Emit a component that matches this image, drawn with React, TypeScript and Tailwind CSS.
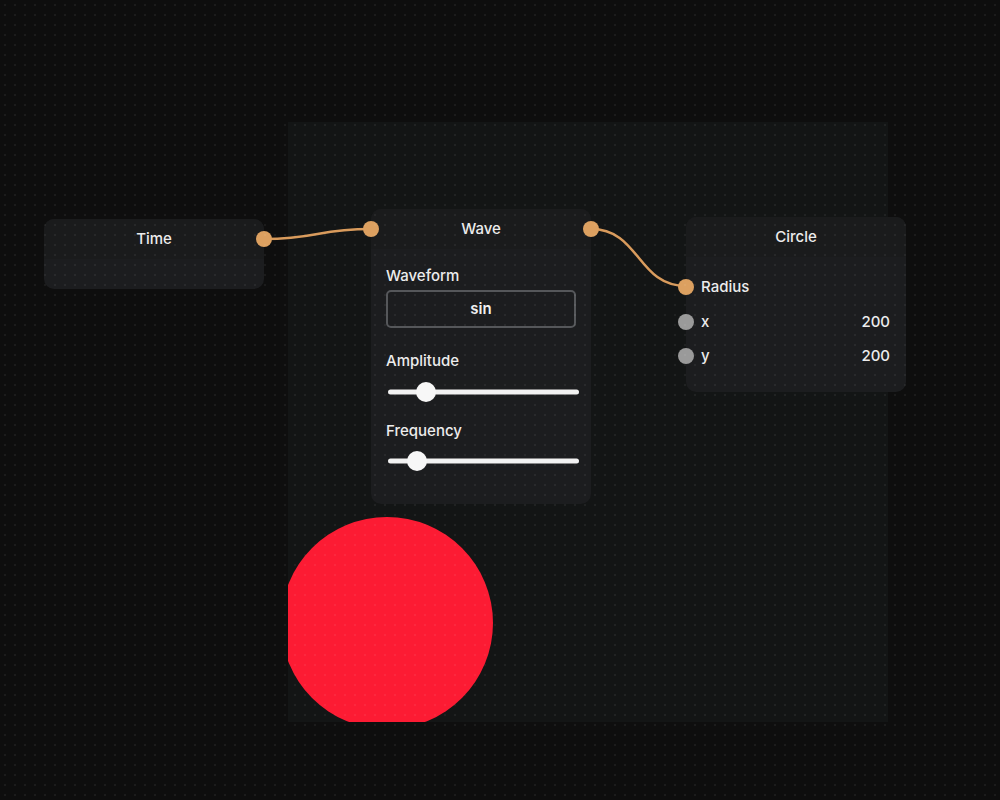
const font = { fontFamily: "Inter, 'Liberation Sans', sans-serif" };

function Handle({ className }: { className: string }) {
  return (
    <span
      className={`absolute h-[16px] w-[16px] -translate-x-1/2 -translate-y-1/2 rounded-full ${className}`}
    />
  );
}

function NodeHeader({ title }: { title: string }) {
  return (
    <div className="flex h-10 items-center justify-center rounded-t-[10px] bg-[#1a1b1c] pt-[1px] text-[15px] font-medium text-[#ececec]">
      {title}
    </div>
  );
}

function Slider({ label, pos }: { label: string; pos: number }) {
  return (
    <div className="flex flex-col">
      <span className="text-[15px] font-medium text-[#ececec]">{label}</span>
      <div className="relative mt-[9px] ml-[2px] mr-[-3px] h-5">
        <div className="absolute left-0 right-0 top-1/2 h-[5px] -translate-y-1/2 rounded-full bg-[#f2f2f2]" />
        <div
          className="absolute top-0 h-5 w-5 -translate-x-1/2 rounded-full bg-[#f7f7f7]"
          style={{ left: pos }}
        />
      </div>
    </div>
  );
}

export default function App() {
  return (
    <div
      className="relative h-[800px] w-[1000px] overflow-hidden bg-[#0e0e0e]"
      style={font}
    >
      {/* preview canvas */}
      <div className="absolute left-[288px] top-[122px] h-[600px] w-[600px] overflow-hidden bg-[#131515]">
        <div className="absolute left-[-7px] top-[395px] h-[212px] w-[212px] rounded-full bg-[#fc1b33]" />
      </div>

      {/* edges */}
      <svg className="absolute inset-0" width={1000} height={800}>
        <path
          d="M264 239 C 318 239, 317 229, 371 229"
          fill="none"
          stroke="#d99b5c"
          strokeWidth={2.5}
        />
        <path
          d="M591 229 C 640 229, 637 286, 686 286"
          fill="none"
          stroke="#d99b5c"
          strokeWidth={2.5}
        />
      </svg>

      {/* Time node */}
      <div className="absolute left-[44px] top-[219px] h-[70px] w-[220px] rounded-[10px] bg-[#1c1d1f]">
        <NodeHeader title="Time" />
        <div className="absolute left-[220px] top-5">
          <Handle className="bg-[#dca060]" />
        </div>
      </div>

      {/* Wave node */}
      <div className="absolute left-[371px] top-[209px] w-[220px] rounded-[10px] bg-[#1c1d1f]">
        <NodeHeader title="Wave" />
        <div className="absolute left-0 top-5">
          <Handle className="bg-[#dca060]" />
        </div>
        <div className="absolute left-[220px] top-5">
          <Handle className="bg-[#dca060]" />
        </div>
        <div className="flex flex-col px-[15px] pb-[33px] pt-[17px]">
          <span className="text-[15px] font-medium leading-5 text-[#ececec]">
            Waveform
          </span>
          <div className="mt-[4px] flex h-[38px] items-center justify-center rounded-[5px] border-2 border-[#55575a] text-[15px] font-semibold text-[#f0f0f0]">
            sin
          </div>
          <div className="mt-[22px] flex flex-col gap-[18px]">
            <Slider label="Amplitude" pos={38} />
            <Slider label="Frequency" pos={29} />
          </div>
        </div>
      </div>

      {/* Circle node */}
      <div className="absolute left-[686px] top-[217px] h-[175px] w-[220px] rounded-[10px] bg-[#1c1d1f]">
        <NodeHeader title="Circle" />
        <div className="flex flex-col pt-[13px]">
          {[
            { label: "Radius", value: "", color: "bg-[#dca060]" },
            { label: "x", value: "200", color: "bg-[#9a9a9a]" },
            { label: "y", value: "200", color: "bg-[#9a9a9a]" },
          ].map((row) => (
            <div
              key={row.label}
              className="relative flex h-[34.5px] items-center justify-between pl-[15px] pr-[16px] text-[15px] font-medium text-[#ececec]"
            >
              <div className="absolute left-0 top-1/2">
                <Handle className={row.color} />
              </div>
              <span>{row.label}</span>
              <span>{row.value}</span>
            </div>
          ))}
        </div>
      </div>

      {/* dot grid overlay */}
      <div className="pointer-events-none absolute inset-0 bg-[radial-gradient(circle,rgba(255,255,255,0.06)_1px,transparent_1.2px)] bg-[size:10px_10px]" />
    </div>
  );
}
